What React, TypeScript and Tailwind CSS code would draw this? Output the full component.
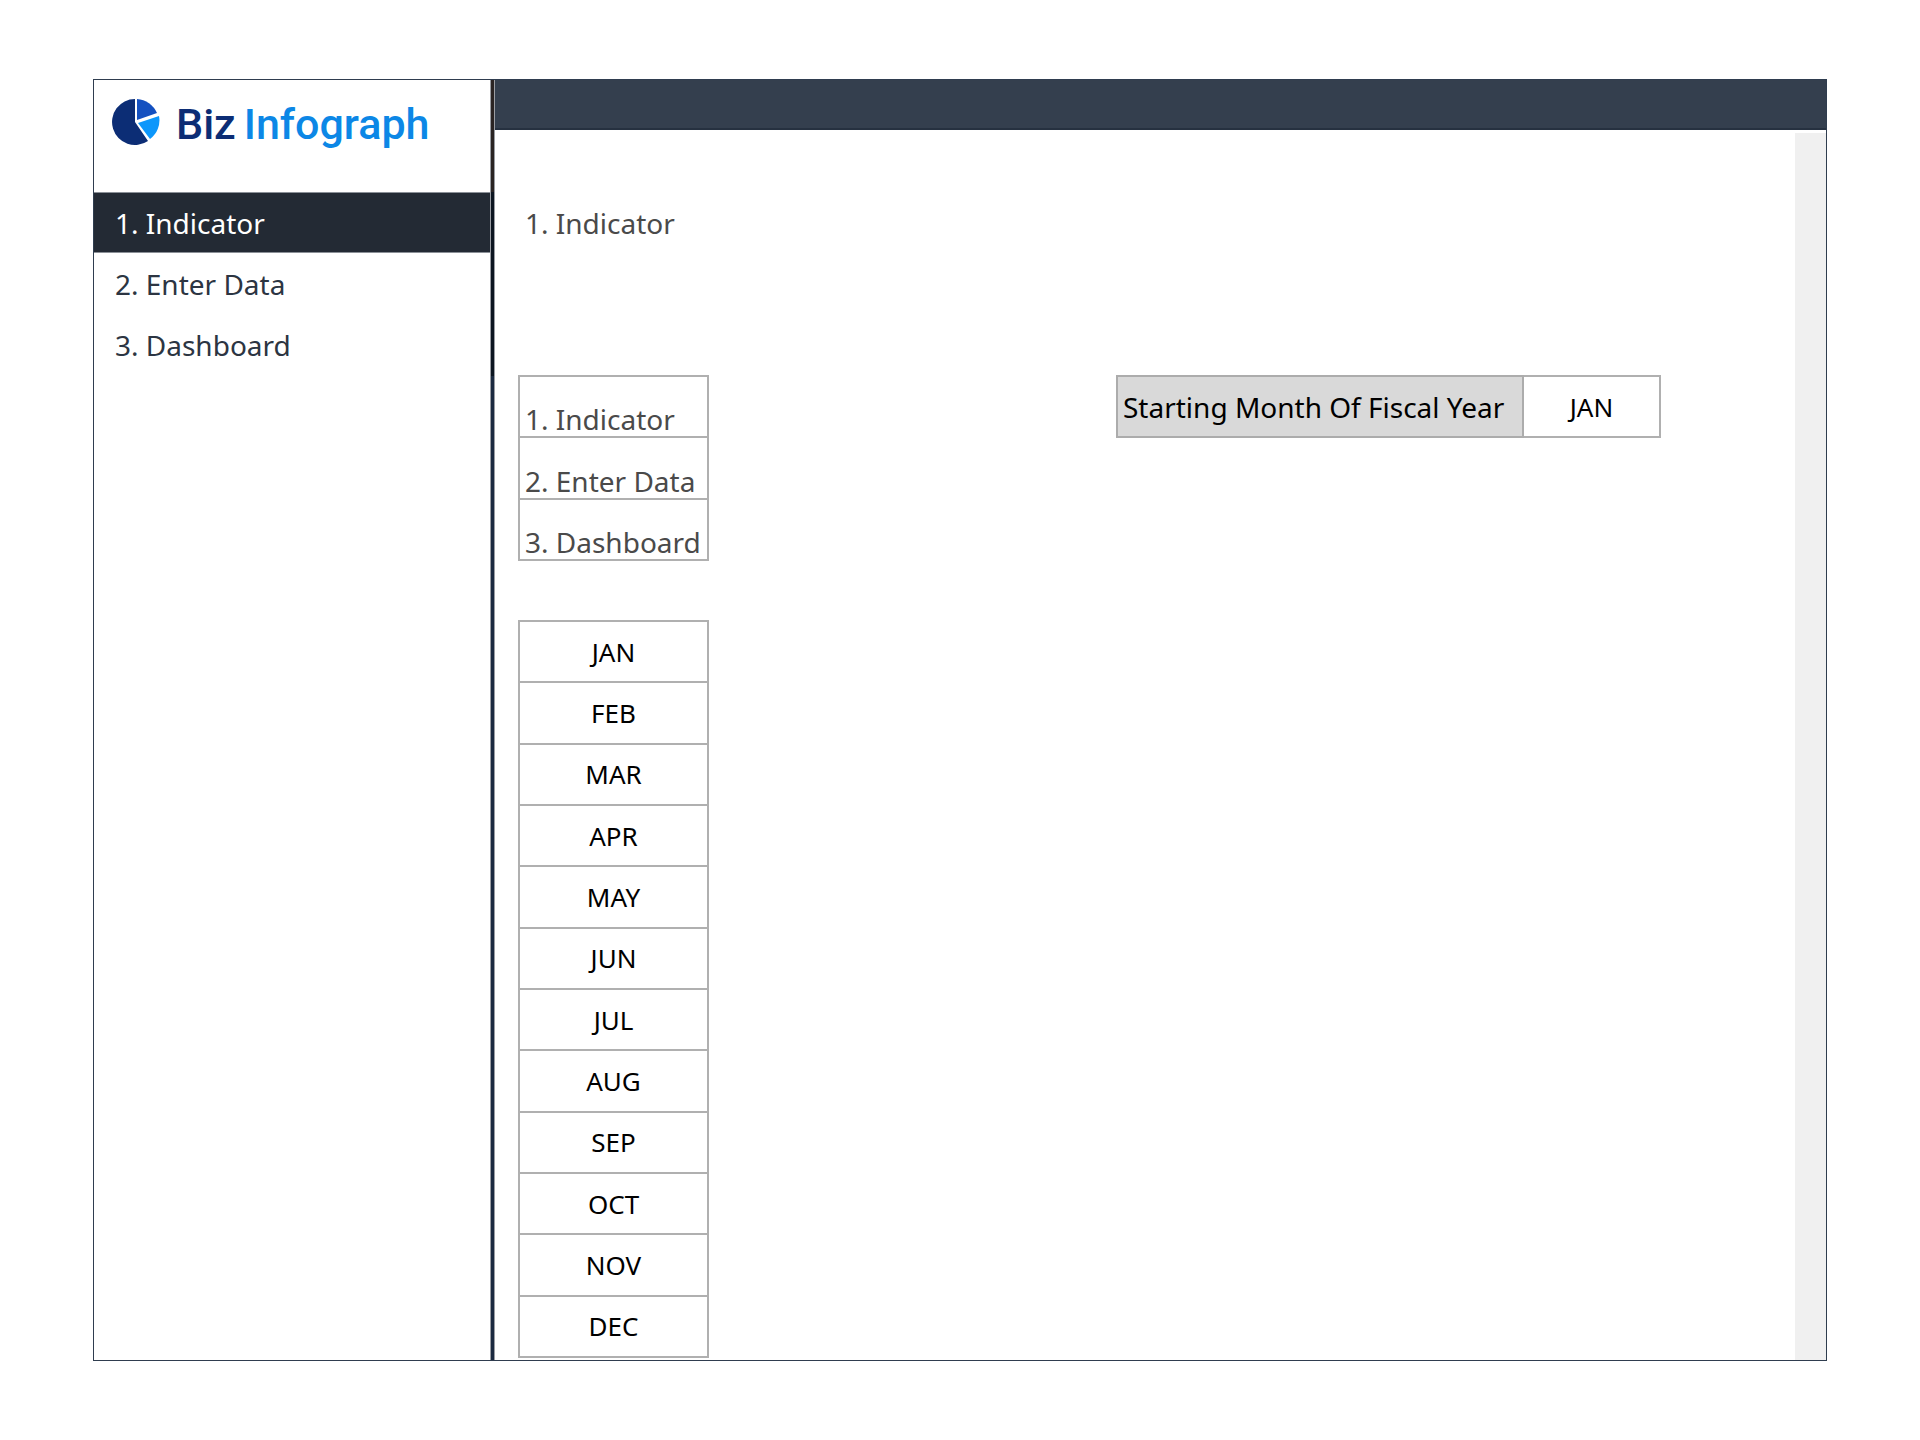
const sections = ["1. Indicator", "2. Enter Data", "3. Dashboard"];

const months = ["JAN", "FEB", "MAR", "APR", "MAY", "JUN", "JUL", "AUG", "SEP", "OCT", "NOV", "DEC"];

function Logo() {
  return (
    <div className="flex h-[112px] items-start pt-[18px] pl-[18px]">
      <svg viewBox="0 0 48 48" className="h-12 w-12 shrink-0" aria-hidden="true">
        <path d="M23 24 L23 1 A23 23 0 1 0 36 43 Z" fill="#0c2d75" />
        <path d="M25 22 L25 1 A23 23 0 0 1 45 15 Z" fill="#1450c0" />
        <path d="M26 25 L47 18 A23 23 0 0 1 38 41 Z" fill="#0c97fb" />
      </svg>
      <div className="ml-4 flex gap-2 font-['Roboto'] text-[43px] leading-[52px] font-medium">
        <span className="text-[#0c2d75]">Biz</span>
        <span className="text-[#0c87e6]">Infograph</span>
      </div>
    </div>
  );
}

function Sidebar() {
  return (
    <aside className="w-[396px] shrink-0">
      <Logo />
      <nav className="flex flex-col">
        {sections.map((label, i) => (
          <a
            key={label}
            href="#"
            aria-current={i === 0 ? "page" : undefined}
            className={
              i === 0
                ? "flex h-[61px] items-center border-y border-[#8b9097] bg-[#232a34] pl-[21px] text-white"
                : "flex h-[61px] items-center pl-[21px] text-[#2c3542]"
            }
          >
            {label}
          </a>
        ))}
      </nav>
    </aside>
  );
}

function Divider() {
  return (
    <div className="flex w-[5px] shrink-0 flex-col border-x border-[#9a9da3]">
      <div className="h-[112px] bg-[#2a2423]" />
      <div className="h-[184px] bg-[#0c1520]" />
      <div className="grow bg-[#1b2a40]" />
    </div>
  );
}

export default function App() {
  return (
    <div className="min-h-screen bg-white px-[93px] py-[79px] font-['Noto_Sans',sans-serif] text-[28px] leading-[34px] text-black">
      <div className="flex min-h-[1282px] border border-[#2f3d4f] bg-white">
        <Sidebar />
        <Divider />
        <div className="flex min-w-0 grow flex-col">
          <header className="h-[50px] border-b-2 border-[#263140] bg-[#343f4e]" />
          <div className="flex grow">
            <main className="min-w-0 grow pl-[23px]">
              <h1 className="mt-[76px] pl-[7px] text-[#4a4a4a]">{sections[0]}</h1>
              <div className="mt-[135px] flex items-start justify-between pr-[134px]">
                <div>
                  <table className="h-[186px] w-[191px] border-collapse text-[#4a4a4a]">
                    <tbody>
                      {sections.map((label) => (
                        <tr key={label}>
                          <td className="border-2 border-[#b0b0b0] pl-[5px] align-bottom whitespace-nowrap">{label}</td>
                        </tr>
                      ))}
                    </tbody>
                  </table>
                  <table className="mt-[59px] h-[738px] w-[191px] border-collapse text-center text-[26px]">
                    <tbody>
                      {months.map((month) => (
                        <tr key={month}>
                          <td className="border-2 border-[#b0b0b0]">{month}</td>
                        </tr>
                      ))}
                    </tbody>
                  </table>
                </div>
                <table className="h-[63px] w-[545px] border-collapse">
                  <tbody>
                    <tr>
                      <th className="border-2 border-[#acacac] bg-[#d9d9d9] pl-[5px] text-left font-normal whitespace-nowrap">
                        <label htmlFor="start-month">Starting Month Of Fiscal Year</label>
                      </th>
                      <td className="w-[137px] border-2 border-[#b0b0b0] text-[26px]">
                        <select id="start-month" defaultValue="JAN" className="w-full appearance-none text-center">
                          {months.map((month) => (
                            <option key={month}>{month}</option>
                          ))}
                        </select>
                      </td>
                    </tr>
                  </tbody>
                </table>
              </div>
            </main>
            <div className="mt-[3px] w-[31px] shrink-0 bg-[#f0f0f0]" />
          </div>
        </div>
      </div>
    </div>
  );
}
